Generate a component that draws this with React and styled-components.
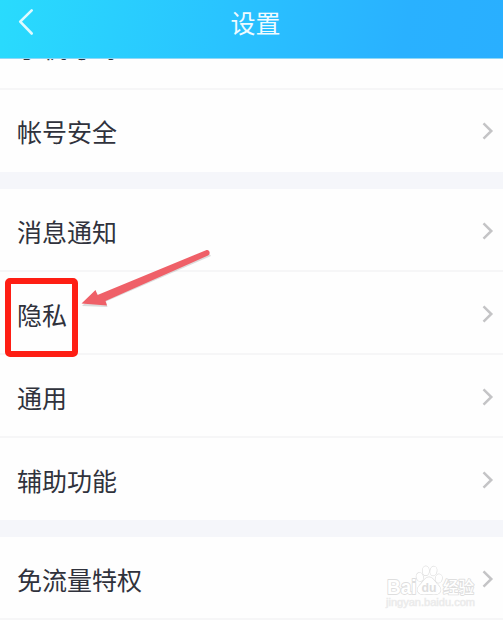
import React from 'react';
import styled, {createGlobalStyle} from "styled-components";

const GlobalStyle = createGlobalStyle`
    * {
        box-sizing: border-box;
    }
    body {
        margin: 0;
        background-color: #fefefe;
        font-family: "Noto Sans CJK SC", "Noto Sans", sans-serif;
        overflow: hidden;
    }
`
const Screen = styled.main`
    position: relative;
    display: flex;
    flex-direction: column;
    width: 503px;
    height: 620px;
    overflow: hidden;
`
const Header = styled.header`
    flex: none;
    display: grid;
    grid-template-columns: 53px 1fr 47px;
    align-items: center;
    height: 59px;
    padding-bottom: 13px;
    border-bottom: 1px solid #8fd8f7;
    background: linear-gradient(100deg, #29dbfd 0%, #29c3ff 45%, #29b1ff 80%, #29afff 100%);
`
const BackButton = styled.button`
    padding: 0 0 0 17px;
    height: 30px;
    border: 0;
    background: none;
    svg {
        display: block;
    }
`
const Title = styled.h1`
    margin: 0;
    padding-left: 2px;
    color: #f0fbff;
    font-size: 25px;
    font-weight: 400;
    line-height: 45px;
    text-align: center;
`
/*под шапкой видна только нижняя часть первой строки*/
const Content = styled.div`
    flex: 1;
    display: flex;
    flex-direction: column;
    justify-content: flex-end;
    min-height: 0;
    overflow: hidden;
`
const Row = styled.div`
    display: flex;
    align-items: center;
    justify-content: space-between;
    height: ${({$height}) => $height || 82}px;
    padding: 0 9px 0 17px;
    border-bottom: ${({$line}) => $line ? '2px solid #f6f6f7' : '0'};
    color: #30323c;
    font-size: 25px;
    line-height: 36px;
`
const Group = styled.section`
    flex: none;
    & + & {
        border-top: 17px solid #f5f6fa;
    }
    & + & ${Row} {
        padding-top: 2px;
    }
`
const HighlightBox = styled.div`
    position: absolute;
    left: 5px;
    top: 278px;
    width: 73px;
    height: 79px;
    border: 6px solid #fe1e14;
    border-radius: 5px;
`
const Arrow = styled.svg`
    position: absolute;
    left: 76px;
    top: 244px;
`
const Watermark = styled.svg`
    position: absolute;
    left: 380px;
    top: 560px;
`
const groups = [
    [
        {label: '手机号码', line: true, height: 84},
        {label: '帐号安全'}
    ],
    [
        {label: '消息通知', line: true, height: 83},
        {label: '隐私', line: true, height: 83},
        {label: '通用', line: true, height: 83},
        {label: '辅助功能'}
    ],
    [
        {label: '免流量特权', line: true, height: 83}
    ]
]

const Chevron = () => (
    <svg width="13" height="20" viewBox="0 0 13 20" fill="none">
        <path d="M2.5 2.3 10.3 10 2.5 17.7" stroke="#c4c4c6" strokeWidth="2.5"/>
    </svg>
)

const BaiduMark = () => (
    <Watermark width="110" height="54" viewBox="0 0 110 54">
        <g fill="#fff" stroke="#dedede" strokeWidth="1.8" paintOrder="stroke" strokeLinejoin="round">
            <text x="7" y="33.5" fontFamily="Liberation Sans, sans-serif" fontWeight="700" fontSize="20.5"
                  textLength="29.5" lengthAdjust="spacingAndGlyphs">Bai</text>
            <g strokeWidth="1.4">
                <ellipse cx="39.8" cy="17" rx="3.3" ry="4.2" transform="rotate(-15 39.8 17)"/>
                <ellipse cx="45.8" cy="10.8" rx="3.2" ry="4.5"/>
                <ellipse cx="53.5" cy="11" rx="3.2" ry="4.5" transform="rotate(10 53.5 11)"/>
                <ellipse cx="58.8" cy="18.5" rx="3.2" ry="4.2" transform="rotate(10 58.8 18.5)"/>
                <path d="M49 17.3c-3.6 0-5 3.6-7.6 6.1-3.3 3.1-4.8 5.4-3.4 8.4 1.7 3.4 5.8 2.5 11 2.5s9.5.9 11.2-2.5c1.4-3-.5-5.4-3.6-8.4-2.6-2.5-4-6.1-7.6-6.1Z"/>
            </g>
            <text x="63" y="33" fontSize="15.5" fontWeight="500"
                  fontFamily="Noto Sans CJK SC, sans-serif">经验</text>
        </g>
        <text x="6" y="46" fill="#e8e8e8" fontFamily="Liberation Sans, sans-serif"
              fontSize="10.5" stroke="#ececec" strokeWidth="0.5"
              textLength="89" lengthAdjust="spacingAndGlyphs">jingyan.baidu.com</text>
        <text x="41.5" y="32" fill="#dedede" fontFamily="Liberation Sans, sans-serif" fontWeight="700"
              fontSize="13" textLength="15" lengthAdjust="spacingAndGlyphs">du</text>
    </Watermark>
)

const App = () => {
    return (
        <Screen>
            <GlobalStyle/>
            <Header>
                <BackButton aria-label="返回">
                    <svg width="18" height="30" viewBox="0 0 18 30" fill="none">
                        <path d="M14.7 2.3 3.2 13.7 14.7 25.5" stroke="#defaff" strokeWidth="2.6"
                              strokeLinecap="round" strokeLinejoin="round"/>
                    </svg>
                </BackButton>
                <Title>设置</Title>
            </Header>
            <Content>
                {
                    groups.map((rows, index) => (
                        <Group key={index}>
                            {
                                rows.map(({label, line, height}) => (
                                    <Row key={label} $line={line} $height={height}>
                                        <span>{label}</span>
                                        <Chevron/>
                                    </Row>
                                ))
                            }
                        </Group>
                    ))
                }
            </Content>
            <HighlightBox/>
            <Arrow width="140" height="70" viewBox="0 0 140 70">
                <g transform="translate(1 2)" opacity="0.25">
                    <path d="M131 6 134 10 29 55.5 30.5 61 5 60 19 46 23 51Z" fill="#777"/>
                </g>
                <path d="M130 6.2c3.4-1.5 5.2 3.7 2 5.2L29.5 57l1.5 4.5L5.5 59.5 19.5 46l2 5Z" fill="#ef6068"/>
            </Arrow>
            <BaiduMark/>
        </Screen>
    );
}
export default App
